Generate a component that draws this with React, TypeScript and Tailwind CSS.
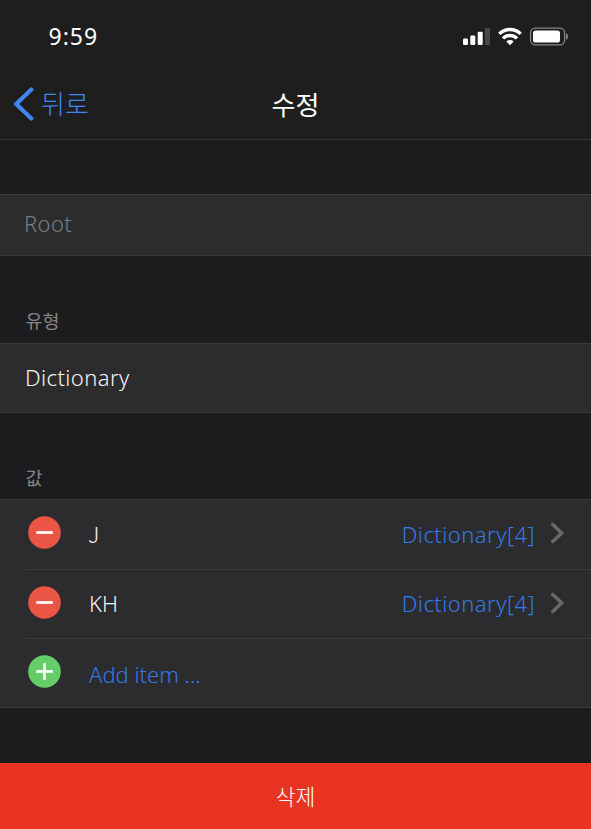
import type { ReactNode } from "react";

const latin = "font-['Noto_Sans','Noto_Sans_CJK_KR',sans-serif]";
const korean = "font-['Noto_Sans_CJK_KR',sans-serif]";

function StatusIcons() {
  return (
    <svg className="mt-[26px] h-[20px] w-[106px]" viewBox="462 26 106 20" fill="none">
      <g fill="#fff">
        <rect x="463" y="38.5" width="5" height="6.5" rx="1.3" />
        <rect x="470.3" y="35.5" width="5" height="9.5" rx="1.3" />
        <rect x="477.7" y="31.7" width="5" height="13.3" rx="1.3" />
        <rect x="485" y="28" width="5" height="17" rx="1.3" fill="#48484a" />
      </g>
      <g stroke="#fff" strokeWidth="3.4">
        <path d="M499.3 33.9a15.2 15.2 0 0 1 21.4 0" />
        <path d="M503 38.4a9.9 9.9 0 0 1 14 0" />
      </g>
      <path d="M506.3 41.4a5.4 5.4 0 0 1 7.4 0L510 45.2z" fill="#fff" />
      <rect x="530.6" y="28.1" width="34" height="16.8" rx="4.6" stroke="#858585" strokeWidth="1.3" />
      <rect x="533" y="30.5" width="27" height="12" rx="2.6" fill="#fff" />
      <path d="M566 33.3c2.7 1 2.7 5.4 0 6.4z" fill="#858585" />
    </svg>
  );
}

function Badge({ kind }: { kind: "remove" | "add" }) {
  return (
    <svg className="mt-[16px] size-[33px] shrink-0" viewBox="0 0 33 33" fill="none">
      <circle cx="16.5" cy="16.5" r="16.3" fill={kind === "add" ? "#65cd68" : "#eb5545"} />
      <path d="M8.3 16.5h16.5" stroke="#fff" strokeWidth="2.7" />
      {kind === "add" && <path d="M16.5 8.3v16.5" stroke="#fff" strokeWidth="2.7" />}
    </svg>
  );
}

function Row({ name, value }: { name: string; value: string }) {
  return (
    <div className="ml-[26px] flex h-[69.5px] border-b border-[#3b3b3d] pl-[2px]">
      <Badge kind="remove" />
      <span className={`${name === "J" ? korean + " -ml-px mt-[17px] pl-[28px]" : latin + " ml-[28px] mt-[17px]"} leading-[32px] text-[#f4f4f4]`}>{name}</span>
      <span className="ml-auto mt-[17.5px] leading-[32px] tracking-[0.45px] text-[#3478e5]">{value}</span>
      <svg className="ml-[15px] mr-[26px] mt-[22px] h-[22px] w-[15px]" viewBox="0 0 15 22" fill="none">
        <path d="M2.8 2.4l8.9 8.6-8.9 8.6" stroke="#68686a" strokeWidth="3.5" strokeLinecap="round" />
      </svg>
    </div>
  );
}

function Label({ children }: { children: ReactNode }) {
  return <h2 className={`${korean} pl-[25.5px] text-[18.5px] font-normal leading-[26px] text-[#858588]`}>{children}</h2>;
}

export default function App() {
  return (
    <main className={`${latin} flex h-[829px] w-[591px] flex-col overflow-hidden bg-[#1c1c1e] text-[22px] font-light`}>
      <header className="h-[140px] border-b border-[#343436] bg-[#1e1e1e]">
        <div className="flex h-[72px] justify-between pl-[48.5px] pr-[23px]">
          <span className="mt-[20px] text-[23px] font-normal leading-[32px] tracking-[1px] text-white">9:59</span>
          <StatusIcons />
        </div>
        <div className="grid h-[64px] grid-cols-3 items-center">
          <button className={`${korean} flex items-center pl-[13px] text-[26px] font-light text-[#3f86ee]`}>
            <svg className="h-[34px] w-[22px]" viewBox="0 0 22 34" fill="none">
              <path d="M18.3 2.5L3.2 17l15.1 14.5" stroke="currentColor" strokeWidth="4.2" strokeLinecap="round" />
            </svg>
            <span className="-mt-[3px] ml-[6px]">뒤로</span>
          </button>
          <h1 className={`${korean} pb-[2px] text-center text-[26px] font-normal text-white`}>수정</h1>
        </div>
      </header>
      <section className="mt-[54px] h-[62px] border-y border-[#3b3b3d] bg-[#2c2c2e] pl-[24px] pt-[12px] leading-[32px] tracking-[0.35px] text-[#7d7d7f]">
        Root
      </section>
      <section className="mt-[51px]">
        <Label>유형</Label>
        <div className="mt-[10px] h-[70px] border-y border-[#3b3b3d] bg-[#2c2c2e] pl-[25px] pt-[17px] leading-[32px] tracking-[0.4px] text-[#f4f4f4]">
          Dictionary
        </div>
      </section>
      <section className="mt-[51px]">
        <Label>값</Label>
        <div className="mt-[9px] h-[209px] border-y border-[#3b3b3d] bg-[#2c2c2e]">
          <Row name="J" value="Dictionary[4]" />
          <Row name="KH" value="Dictionary[4]" />
          <div className="flex pl-[28px] text-[#3478e5]">
            <Badge kind="add" />
            <span className="ml-[28px] mt-[19px] leading-[32px]">Add item ...</span>
          </div>
        </div>
      </section>
      <button className={`${korean} mt-auto h-[66px] shrink-0 bg-[#e93323] text-[21.5px] font-light text-white`}>
        삭제
      </button>
    </main>
  );
}
